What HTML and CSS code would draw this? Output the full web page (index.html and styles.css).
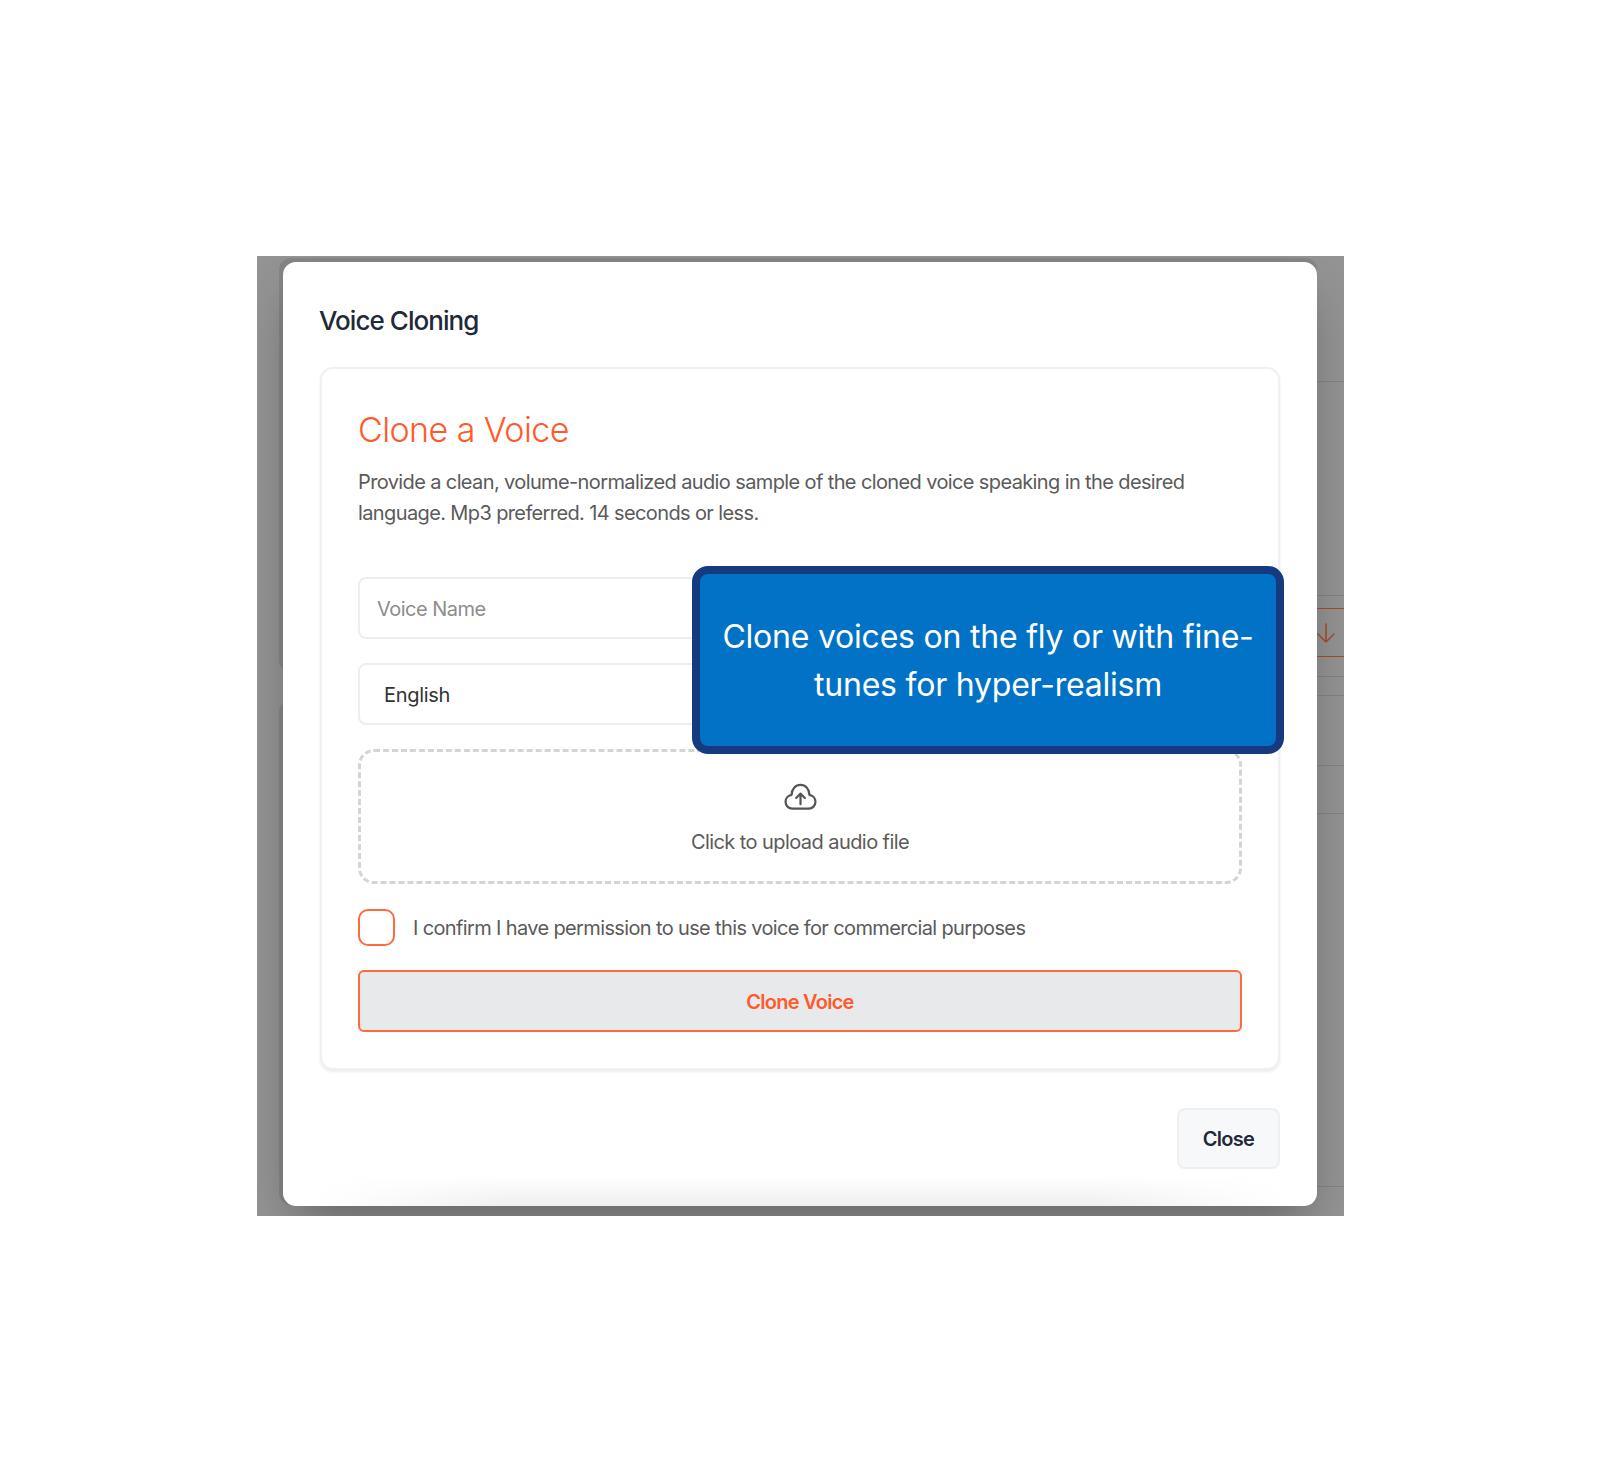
FILE: index.html
```html
<!DOCTYPE html>
<html lang="en">
<head>
<meta charset="utf-8">
<title>Voice Cloning</title>
<link rel="stylesheet" href="styles.css">
</head>
<body>
<div class="backdrop">
  <div class="under under-top"></div>
  <div class="under under-bottom"></div>
  <div class="strip">
    <i class="rule r1"></i><i class="rule r2"></i><i class="rule r3 accent"></i><i class="rule r4 accent"></i>
    <i class="rule r5"></i><i class="rule r6"></i><i class="rule r7"></i><i class="rule r8"></i><i class="rule r9"></i>
    <svg class="strip-arrow" viewBox="0 0 24 24" width="24" height="24" fill="none" stroke="#a84a2a" stroke-width="1.5" stroke-linecap="round" stroke-linejoin="round"><path d="M12 3v18M4 13l8 8 8-8"/></svg>
  </div>
  <div class="modal">
    <h2 class="modal-title">Voice Cloning</h2>
    <section class="card">
      <h3 class="card-title">Clone a Voice</h3>
      <p class="card-desc">Provide a clean, volume-normalized audio sample of the cloned voice speaking in the desired language. Mp3 preferred. 14 seconds or less.</p>
      <div class="field placeholder">Voice Name</div>
      <div class="field select">English</div>
      <div class="upload">
        <svg class="upload-icon" viewBox="0 0 34 28" width="33" height="27" fill="none" stroke="#555" stroke-width="2.300" stroke-linecap="round" stroke-linejoin="round"><path d="M8.500 26.500H25.500C29.500 26.500 32.500 23.500 32.500 19.500C32.500 15.800 29.800 12.800 26.200 12.300C26.200 6.500 22.300 2 17 2C11.700 2 7.800 6.500 7.800 12.300C4.200 12.800 1.500 15.800 1.500 19.500C1.500 23.500 4.500 26.500 8.500 26.500Z"/><path d="M17 22V11M12.500 15.500L17 11L21.500 15.500"/></svg>
        <div class="upload-text">Click to upload audio file</div>
      </div>
      <label class="confirm"><span class="checkbox"></span><span class="confirm-text">I confirm I have permission to use this voice for commercial purposes</span></label>
      <button class="clone-btn" type="button">Clone Voice</button>
    </section>
    <div class="modal-foot"><button class="close-btn" type="button">Close</button></div>
  </div>
  <div class="tip">Clone voices on the fly or with fine-tunes for hyper-realism</div>
</div>
</body>
</html>
```
FILE: styles.css
```css
* { box-sizing: border-box; }
html, body { margin: 0; background: #fff; }
body { height: 1472px; padding: 256px 0 0 257px; font-family: Inter, "Liberation Sans", sans-serif; overflow: hidden; }
.backdrop { position: relative; width: 1087px; height: 960px; background: #939393; overflow: hidden; padding: 6px 27px 0 26px; }
.under { position: absolute; left: 22px; width: 60px; background: #858585; border-radius: 12px; }
.under-top { top: 2px; height: 414px; width: 1038px; }
.under-bottom { top: 444px; height: 505px; }
.strip { position: absolute; left: 1060px; top: 0; width: 27px; height: 100%; }
.rule { position: absolute; left: 0; right: 0; height: 1px; background: #838383; }
.rule.accent { background: #a84a2a; }
.r1 { top: 125px; } .r2 { top: 339px; } .r3 { top: 352px; } .r4 { top: 400px; } .r5 { top: 420px; }
.r6 { top: 439px; } .r7 { top: 509px; } .r8 { top: 557px; } .r9 { top: 930px; }
.strip-arrow { position: absolute; left: -3px; top: 365px; }
.modal { position: relative; width: 1034px; height: 944px; background: #fff; border-radius: 13px; padding: 39px 37px 0; box-shadow: 0 25px 50px -12px rgba(0,0,0,.33); }
.modal::after { content: ""; position: absolute; left: 0; right: 0; bottom: 0; height: 30px; border-radius: 0 0 13px 13px; background: linear-gradient(to top, #efefef, rgba(255,255,255,0)); -webkit-mask-image: linear-gradient(90deg, transparent 3%, #000 22%, #000 78%, transparent 97%); mask-image: linear-gradient(90deg, transparent 3%, #000 22%, #000 78%, transparent 97%); }
.modal-title { margin: 0 0 0 -1px; font-size: 26px; line-height: 40px; font-weight: 500; color: #1f2937; letter-spacing: -0.95px; }
.card { margin-top: 26px; height: 703px; border: 2px solid #f0f0f1; border-radius: 13px; padding: 39px 36px 0; background: #fff; box-shadow: 0 2px 3px rgba(0,0,0,.08); }
.card-title { margin: 0; font-size: 34px; line-height: 44px; font-weight: 300; color: #ff5a2b; letter-spacing: -0.58px; }
.card-desc { margin: 15px 0 0; font-size: 20px; line-height: 30.6px; color: #5a5a5a; letter-spacing: -0.62px; }
.field { height: 62px; border: 2px solid #eeeeef; border-radius: 8px; display: flex; align-items: center; font-size: 20px; padding-top: 1px; }
.placeholder { margin-top: 49px; padding-left: 17px; color: #8d8d8d; letter-spacing: -0.53px; }
.select { margin-top: 24px; padding-left: 24px; color: #333; letter-spacing: -0.3px; }
.upload { margin-top: 24px; height: 135px; border: 3px dashed #d4d4d6; border-radius: 16px; display: flex; flex-direction: column; align-items: center; padding-top: 31px; }
.upload-icon { display: block; }
.upload-text { margin-top: 17px; font-size: 20px; line-height: 30px; color: #5a5a5a; letter-spacing: -0.57px; }
.confirm { display: flex; align-items: center; gap: 18px; margin-top: 25px; }
.checkbox { width: 37px; height: 37px; border: 2px solid #ff6a3d; border-radius: 10px; flex: none; }
.confirm-text { font-size: 20px; color: #5a5a5a; letter-spacing: -0.64px; }
.clone-btn { display: block; width: 100%; margin-top: 24px; height: 62px; padding-top: 2px; background: #e8e9eb; border: 2px solid #ff6a3d; border-radius: 6px; color: #ff5a2b; font: 600 20px Inter, "Liberation Sans", sans-serif; letter-spacing: -0.75px; }
.modal-foot { display: flex; justify-content: flex-end; margin-top: 38px; }
.close-btn { width: 103px; height: 61px; background: #f7f8fa; border: 2px solid #eeeff1; border-radius: 8px; color: #1f2937; font: 600 20px Inter, "Liberation Sans", sans-serif; letter-spacing: -0.7px; }
.tip { position: absolute; left: 435px; top: 310px; width: 592px; height: 188px; background: #0272c6; border: 8px solid #163a80; border-radius: 16px; color: #fff; font-size: 32px; font-weight: 400; line-height: 48px; text-align: center; letter-spacing: -0.22px; padding: 39px 16px 0; }
```
